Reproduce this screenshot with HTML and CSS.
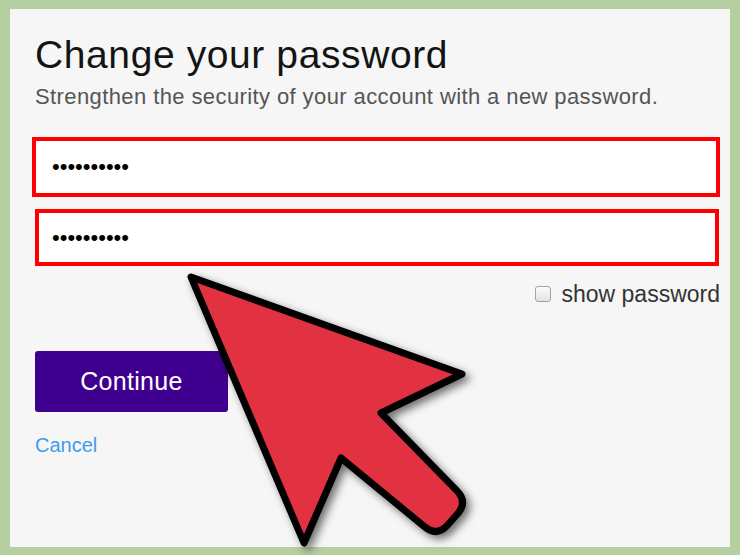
FILE: index.html
```html
<!DOCTYPE html>
<html lang="en">

<head>
    <title>Change your password</title>
    <link rel="stylesheet" href="styles.css">
</head>

<body>
    <div id="panel">
        <h1>Change your password</h1>
        <p class="subtitle">Strengthen the security of your account with a new password.</p>

        <div class="field first">&bull;&bull;&bull;&bull;&bull;&bull;&bull;&bull;&bull;&bull;</div>
        <div class="field second">&bull;&bull;&bull;&bull;&bull;&bull;&bull;&bull;&bull;&bull;</div>

        <label class="show">
            <input type="checkbox">
            <span>show password</span>
        </label>

        <button type="button" class="continue">Continue</button>
        <a href="#" class="cancel">Cancel</a>
    </div>

    <svg class="pointer" width="740" height="555" viewBox="0 0 740 555">
        <path d="M191 277 L462 374 L381 413 L456.8 490.6 Q468 502 457.4 514 L447.6 525 Q437 537 424.6 526.8 L341 458 L304 543 Z"
            fill="#e23242" stroke="#000" stroke-width="7" stroke-linejoin="round" />
    </svg>
</body>

</html>
```
FILE: styles.css
```css
body {
    margin: 0;
    background-color: #b6cfa0;
    position: relative;
    width: 740px;
    height: 555px;
    overflow: hidden;
    font-family: "Liberation Sans", Arial, sans-serif;
}

#panel {
    margin: 9px 10px 0 10px;
    height: 538px;
    background-color: #f6f6f6;
    padding: 23px 10px 0 25px;
    box-sizing: border-box;
    display: flex;
    flex-direction: column;
    align-items: flex-start;
}

h1 {
    margin: 0;
    font-size: 39px;
    line-height: 46px;
    font-weight: normal;
    letter-spacing: 0.6px;
    color: #141414;
}

.subtitle {
    margin: 6px 0 0 0;
    font-size: 22px;
    line-height: 26px;
    letter-spacing: 0.4px;
    color: #555;
}

.field {
    box-sizing: border-box;
    align-self: stretch;
    display: flex;
    align-items: center;
    background-color: #fff;
    border: 4px solid #ff0000;
    font-size: 22px;
    color: #000;
}

.field.first {
    margin: 27px 0 0 -3px;
    height: 60px;
    padding-left: 16px;
}

.field.second {
    margin: 12px 1px 0 0;
    height: 57px;
    padding-left: 13px;
}

.show {
    align-self: flex-end;
    display: flex;
    align-items: center;
    margin-top: 15px;
    font-size: 23px;
    line-height: 26px;
    color: #333;
}

.show input {
    appearance: none;
    -webkit-appearance: none;
    width: 16px;
    height: 16px;
    margin: 0 10px 0 0;
    border: 1px solid #a3a3a3;
    border-radius: 3px;
    background: linear-gradient(#fdfdfd, #e2e2e2);
}

.continue {
    margin-top: 44px;
    width: 193px;
    height: 61px;
    border: none;
    border-radius: 3px;
    background-color: #40008f;
    color: #fff;
    font-family: "Liberation Sans", Arial, sans-serif;
    font-size: 25px;
    letter-spacing: 0.3px;
}

.cancel {
    margin-top: 21px;
    font-size: 20px;
    line-height: 24px;
    color: #3d9cf0;
    text-decoration: none;
}

.pointer {
    position: absolute;
    top: 0;
    left: 0;
    pointer-events: none;
    filter: drop-shadow(4px 4px 4px rgba(0, 0, 0, 0.55));
}
```
